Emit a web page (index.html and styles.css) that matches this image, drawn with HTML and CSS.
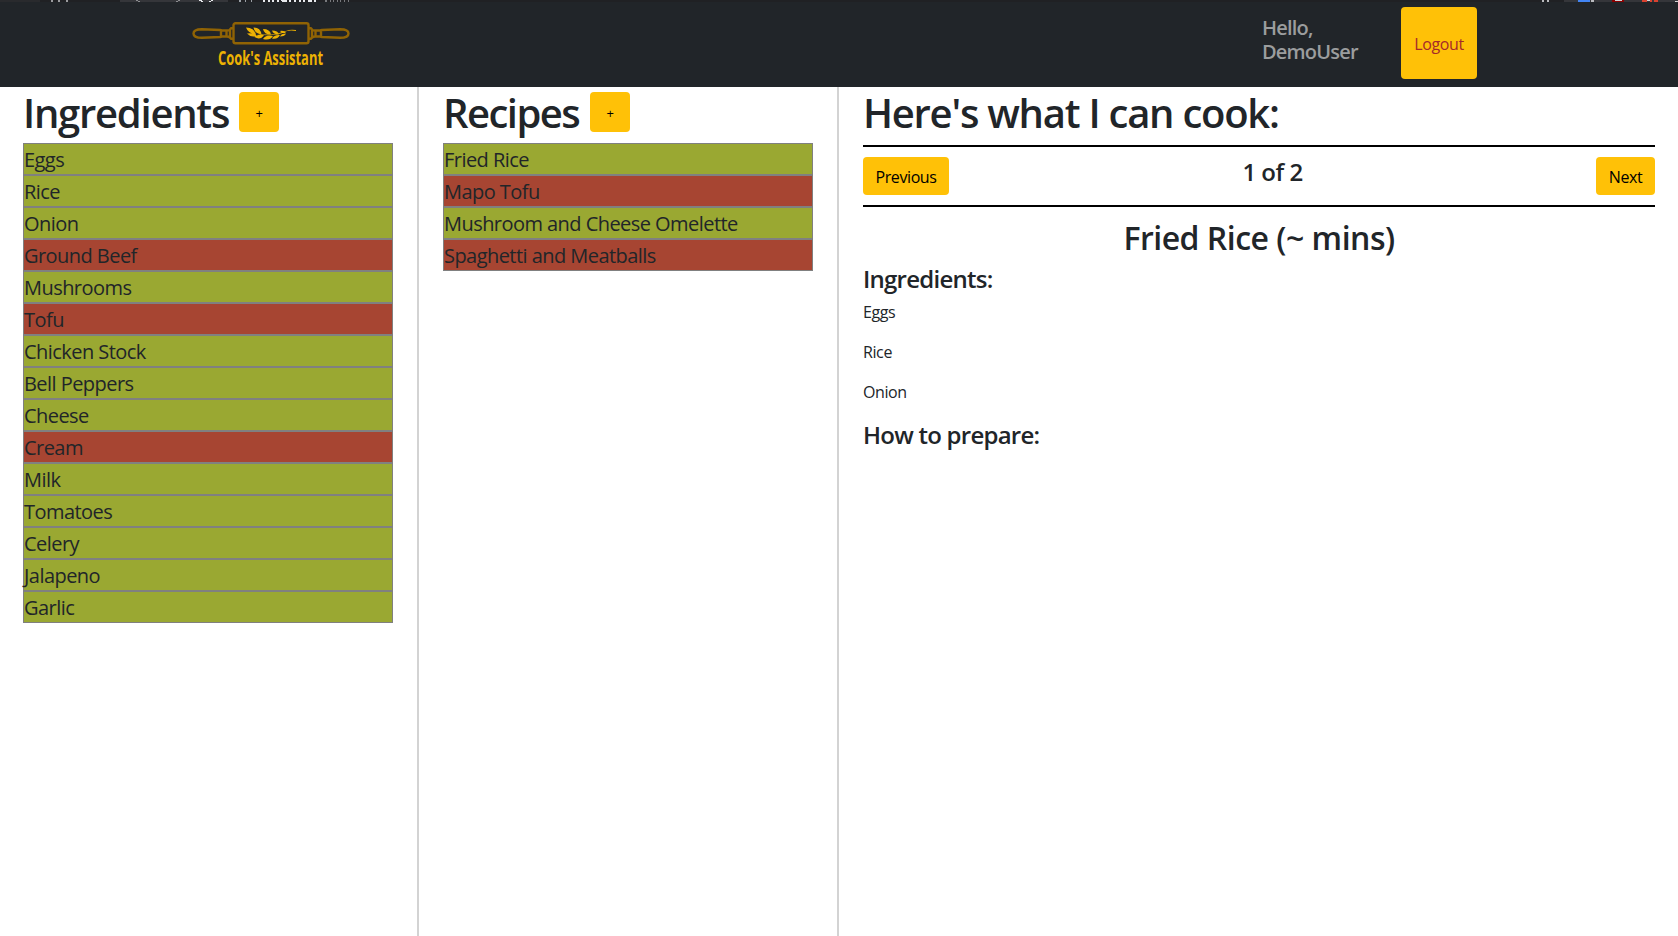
FILE: index.html
```html
<!DOCTYPE html>
<html lang="en">
<head>
<meta charset="utf-8">
<title>Cook's Assistant</title>
<link rel="stylesheet" href="styles.css">
</head>
<body>
<header class="navbar">
  <svg class="chrome" width="1678" height="2" viewBox="0 0 1678 2" shape-rendering="crispEdges">
    <rect width="1678" height="2" fill="#202124"/>
    <rect width="40" height="2" fill="#292a2d"/>
    <rect x="120" width="108" height="2" fill="#35363a"/>
    <rect x="1564" width="114" height="2" fill="#35363a"/>
    <path d="M51 0h2v2h-2zM58 0h2v2h-2zM66 0h2v2h-2z" fill="#9a9b9e"/>
    <path d="M136 0h2v1h-2zM138 1h2v1h-2zM178 0h2v1h-2zM176 1h2v1h-2z" fill="#8d8e91"/>
    <path d="M199 0h3v1h-3zM201 1h2v1h-2zM211 0h2v1h-2zM209 1h2v1h-2z" fill="#e8eaed"/>
    <path d="M239 0h2v2h-2zM245 0h1v2h-1zM251 0h1v2h-1z" fill="#9aa0a6"/>
    <path d="M263 0h2v2h-2zM268 0h2v2h-2zM272 0h2v2h-2zM277 0h2v2h-2zM281 0h6v1h-6zM282 1h5v1h-5zM289 0h2v2h-2zM294 0h2v2h-2zM299 0h2v2h-2zM303 0h2v2h-2zM308 0h4v2h-4zM314 0h2v2h-2z" fill="#e8eaed"/>
    <path d="M325 0h2v2h-2zM330 0h1v2h-1zM333 0h1v2h-1zM337 0h1v2h-1zM340 0h1v2h-1zM344 0h1v2h-1zM348 0h1v2h-1z" fill="#77797d"/>
    <path d="M1542 0h2v2h-2zM1547 0h2v2h-2zM1591 0h3v2h-3z" fill="#b9bbbe"/>
    <path d="M1578 0h12v2h-12z" fill="#4285f4"/>
    <path d="M1612 0h12v2h-12z" fill="#8b0000"/>
    <path d="M1615 0h7v1h-7zM1647 0h3v1h-3zM1675 1h3v1h-3z" fill="#d5d5d7"/>
    <path d="M1642 0h5v2h-5zM1650 0h2v2h-2zM1654 0h4v2h-4z" fill="#d9412f"/>
  </svg>
  <svg class="logo" width="162" height="52" viewBox="0 0 162 52" role="img" aria-label="Cook's Assistant">
    <g fill="none" stroke="#906304" stroke-width="2.400" stroke-linejoin="round">
      <rect x="43.500" y="2.200" width="75" height="20" rx="2"/>
      <path id="handle" d="M43 7.200h-2q-1 2.300-4 2.300h-5l-2-.5-18-.8c-5 0-8.500 1.500-8.500 4.300s3.500 4.300 8.500 4.300l18-.8 2-.5h5q3 0 4 2.300h2M31 9v6.500M36.500 9.500v6M40 8v9"/>
      <use href="#handle" transform="matrix(-1 0 0 1 162 0)"/>
    </g>
    <g fill="#edb203">
      <path d="M56 6.500q8 0 10 7q-8-1-10-7zM63.500 6.500q7 0 8 7q-7-1-8-7zM73 8q7 0 8 5.500q-7 0-8-5.500zM82 9.500q6 0 7 4q-6 0-7-4zM57 12.500q8-1 10 2.500q-6 2-10-2.500zM64.500 16q6-4 9.500-1.500q-4 5-9.500 1.500zM73 18q3-5 10-3q-3 5-10 3zM82 17.500q2-4 8-3.500q-2 4.500-8 3.500zM90 15.500q1-3 6-3q-1 3-6 3zM90 10q4-1 6 2l-4 0z"/>
      <path d="M66 13.200q12 2 21 .3q6-1.500 10-3.500q4-1 9 0v-1q-6-1-10 1q-5 1-9 3q-10 1-21 .2z"/>
    </g>
    <text class="logo-text" transform="translate(28 43.500) scale(.7 1)" textLength="150" lengthAdjust="spacingAndGlyphs">Cook's Assistant</text>
  </svg>
  <div class="account">
    <div class="greeting">Hello,<br>DemoUser</div>
    <button class="btn logout">Logout</button>
  </div>
</header>
<main class="columns">
  <section class="column list-column">
    <div class="heading"><h1 class="title t-ing">Ingredients</h1><button class="btn add">+</button></div>
    <ul class="items">
      <li class="item">Eggs</li><li class="item">Rice</li><li class="item">Onion</li>
      <li class="item missing">Ground Beef</li><li class="item">Mushrooms</li>
      <li class="item missing">Tofu</li><li class="item">Chicken Stock</li>
      <li class="item">Bell Peppers</li><li class="item">Cheese</li>
      <li class="item missing">Cream</li><li class="item">Milk</li>
      <li class="item">Tomatoes</li><li class="item">Celery</li>
      <li class="item">Jalapeno</li><li class="item">Garlic</li>
    </ul>
  </section>
  <section class="column list-column">
    <div class="heading"><h1 class="title t-rec">Recipes</h1><button class="btn add">+</button></div>
    <ul class="items">
      <li class="item">Fried Rice</li><li class="item missing">Mapo Tofu</li>
      <li class="item">Mushroom and Cheese Omelette</li>
      <li class="item missing">Spaghetti and Meatballs</li>
    </ul>
  </section>
  <section class="column cook">
    <div class="heading"><h1 class="title">Here's what I can cook:</h1></div>
    <div class="pager">
      <button class="btn prev">Previous</button>
      <h4 class="count">1 of 2</h4>
      <button class="btn next">Next</button>
    </div>
    <h2 class="recipe">Fried Rice (~ mins)</h2>
    <h4 class="sub">Ingredients:</h4>
    <p class="line">Eggs</p>
    <p class="line">Rice</p>
    <p class="line">Onion</p>
    <h4 class="sub">How to prepare:</h4>
  </section>
</main>
</body>
</html>
```
FILE: styles.css
```css
* { box-sizing: border-box; }
body {
  margin: 0;
  height: 936px;
  display: flex;
  flex-direction: column;
  overflow: hidden;
  background: #fff;
  color: #212529;
  font: 400 16px/24px "Open Sans", "Noto Sans", sans-serif;
}
h1, h2, h4, p, ul { margin: 0; padding: 0; font-weight: 600; }
p { font-weight: 400; }
.navbar {
  position: relative;
  height: 87px;
  flex: none;
  display: flex;
  justify-content: space-between;
  align-items: flex-start;
  padding: 7px 201px 0 190px;
  background: #212529;
}
.chrome { position: absolute; top: 0; left: 0; }
.logo { margin-top: 14px; }
.logo-text { fill: #edb203; font: 700 19.5px "Open Sans", sans-serif; }
.account { display: flex; }
.greeting {
  width: 139px;
  padding-top: 9px;
  color: #9b9d9e;
  font-size: 20px;
  font-weight: 600;
  line-height: 24px;
  letter-spacing: -.8px;
}
.btn {
  border: 0;
  border-radius: 4px;
  background: #ffc107;
  color: #000;
  font: 400 16px/24px "Open Sans", "Noto Sans", sans-serif;
  padding: 1px 0 0;
  letter-spacing: -.4px;
  white-space: nowrap;
}
.logout { width: 76px; height: 72px; color: #a52a2a; }
.columns { flex: 1; display: flex; }
.list-column { width: 420px; padding: 0 24px; border-right: 2px solid #d3d3d3; }
.list-column:first-child { width: 419px; padding-left: 23px; }
.cook { flex: 1; padding: 0 23px 0 24px; }
.heading { height: 56px; display: flex; padding-top: 2px; }
.title { font-size: 40px; line-height: 48px; letter-spacing: -1.25px; white-space: nowrap; }
.t-ing { width: 216px; }
.t-rec { width: 147px; letter-spacing: -1.55px; }
.add { width: 40px; height: 40px; margin-top: 3px; font-size: 13px; }
.items { list-style: none; }
.item {
  height: 32px;
  border: 1px solid #808080;
  background: #9aa832;
  font-size: 20px;
  font-weight: 400;
  line-height: 32px;
  letter-spacing: -.55px;
  white-space: nowrap;
}
.missing { background: #a74532; }
.pager {
  height: 62px;
  margin-top: 2px;
  display: flex;
  justify-content: space-between;
  border-top: 2px solid #000;
  border-bottom: 2px solid #000;
  padding-top: 10px;
}
.prev { width: 86px; height: 38px; }
.next { width: 59px; height: 38px; }
.count { font-size: 24px; line-height: 29px; letter-spacing: -.5px; }
.recipe { margin: 12px 0 7px; font-size: 32px; line-height: 38px; text-align: center; letter-spacing: -.5px; }
.sub { font-size: 24px; line-height: 29px; margin-bottom: 7px; letter-spacing: -.75px; }
.line { line-height: 24px; margin-bottom: 16px; letter-spacing: -.4px; }
```
